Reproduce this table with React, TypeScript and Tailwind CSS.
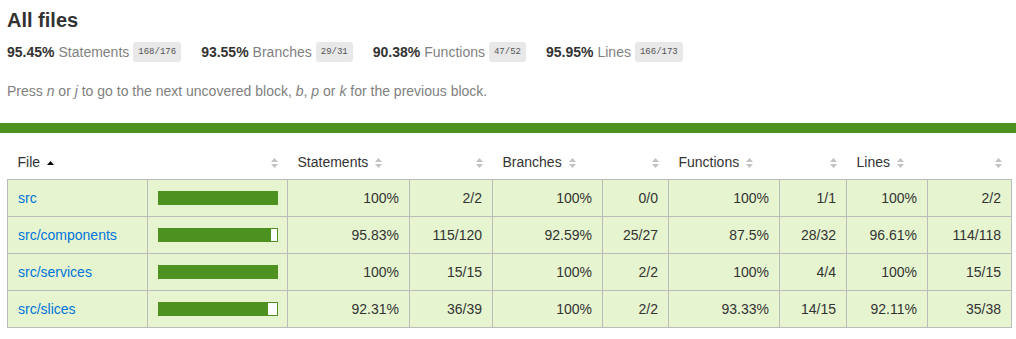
import React from "react"

type row = {
  file: string
  pct: number
  s: [string, string]
  b: [string, string]
  f: [string, string]
  l: [string, string]
}

const rows: row[] = [
  { file: "src", pct: 100, s: ["100%", "2/2"], b: ["100%", "0/0"], f: ["100%", "1/1"], l: ["100%", "2/2"] },
  { file: "src/components", pct: 95.83, s: ["95.83%", "115/120"], b: ["92.59%", "25/27"], f: ["87.5%", "28/32"], l: ["96.61%", "114/118"] },
  { file: "src/services", pct: 100, s: ["100%", "15/15"], b: ["100%", "2/2"], f: ["100%", "4/4"], l: ["100%", "15/15"] },
  { file: "src/slices", pct: 92.31, s: ["92.31%", "36/39"], b: ["100%", "2/2"], f: ["93.33%", "14/15"], l: ["92.11%", "35/38"] },
]

const totals = [
  { pct: "95.45%", label: "Statements", frac: "168/176" },
  { pct: "93.55%", label: "Branches", frac: "29/31" },
  { pct: "90.38%", label: "Functions", frac: "47/52" },
  { pct: "95.95%", label: "Lines", frac: "166/173" },
]

function Sorter({ active }: { active?: boolean }) {
  if (active) {
    return (
      <svg width="7" height="10" viewBox="0 0 7 10" className="inline-block ml-[7px]">
        <polygon points="0,7 3.5,3 7,7" fill="#000" />
      </svg>
    )
  }
  return (
    <svg width="7" height="10" viewBox="0 0 7 10" className="inline-block ml-[7px]">
      <polygon points="0,4 3.5,0 7,4" fill="#c2c2c2" />
      <polygon points="0,6 7,6 3.5,10" fill="#c2c2c2" />
    </svg>
  )
}

const th = "text-left font-normal whitespace-nowrap px-[10px] pt-[11px] pb-[9px] leading-[16px]"
const td = "border border-[#bbb] bg-[#e6f5d0] px-[10px] py-[10px] leading-[16px]"

export default function App() {
  return (
    <div className="w-[1016px] h-[339px] bg-white text-[#333] text-[14px] font-['Liberation_Sans',Arial,sans-serif] overflow-hidden">
      <div className="pl-[7px] pt-[9px]">
        <h1 className="text-[20px] leading-[23px] font-bold">All files</h1>
        <div className="flex mt-[10px] h-[20px] items-center leading-[20px]">
          {totals.map((t) => (
            <div key={t.label} className="flex items-center pr-[20px]">
              <span className="font-bold">{t.pct}</span>
              <span className="ml-[4px] text-[#7f7f7f]">{t.label}</span>
              <span className="ml-[4px] bg-[#e8e8e8] text-[#555] rounded-[3px] px-[5px] h-[20px] flex items-center text-[9px] font-['Liberation_Mono',monospace]">
                {t.frac}
              </span>
            </div>
          ))}
        </div>
        <p className="mt-[19px] leading-[20px] text-[#7f7f7f]">
          Press <em>n</em> or <em>j</em> to go to the next uncovered block, <em>b</em>, <em>p</em> or <em>k</em> for the previous block.
        </p>
      </div>
      <div className="mt-[22px] h-[10px] bg-[#4d9221]"></div>
      <div className="pl-[7px] mt-[10px]">
        <table className="table-fixed border-collapse w-[1004px]">
          <colgroup>
            <col className="w-[140px]" />
            <col className="w-[140px]" />
            <col className="w-[122px]" />
            <col className="w-[83px]" />
            <col className="w-[110px]" />
            <col className="w-[66px]" />
            <col className="w-[111px]" />
            <col className="w-[67px]" />
            <col className="w-[81px]" />
            <col className="w-[84px]" />
          </colgroup>
          <thead>
            <tr>
              <th className={th}>File<Sorter active /></th>
              <th className={th + " text-right"}><Sorter /></th>
              <th className={th}>Statements<Sorter /></th>
              <th className={th + " text-right"}><Sorter /></th>
              <th className={th}>Branches<Sorter /></th>
              <th className={th + " text-right"}><Sorter /></th>
              <th className={th}>Functions<Sorter /></th>
              <th className={th + " text-right"}><Sorter /></th>
              <th className={th}>Lines<Sorter /></th>
              <th className={th + " text-right"}><Sorter /></th>
            </tr>
          </thead>
          <tbody>
            {rows.map((r) => {
              const fill = Math.floor(r.pct)
              return (
                <tr key={r.file}>
                  <td className={td}>
                    <a href="#" className="text-[#0074d9]">{r.file}</a>
                  </td>
                  <td className={td}>
                    <div className="flex h-[14px] w-[120px] border border-[#4d9221]">
                      <div className="h-[12px] bg-[#4d9221]" style={{ width: fill + "%" }}></div>
                      <div className="h-[12px] bg-white" style={{ width: 100 - fill + "%" }}></div>
                    </div>
                  </td>
                  <td className={td + " text-right"}>{r.s[0]}</td>
                  <td className={td + " text-right"}>{r.s[1]}</td>
                  <td className={td + " text-right"}>{r.b[0]}</td>
                  <td className={td + " text-right"}>{r.b[1]}</td>
                  <td className={td + " text-right"}>{r.f[0]}</td>
                  <td className={td + " text-right"}>{r.f[1]}</td>
                  <td className={td + " text-right"}>{r.l[0]}</td>
                  <td className={td + " text-right"}>{r.l[1]}</td>
                </tr>
              )
            })}
          </tbody>
        </table>
      </div>
    </div>
  )
}
